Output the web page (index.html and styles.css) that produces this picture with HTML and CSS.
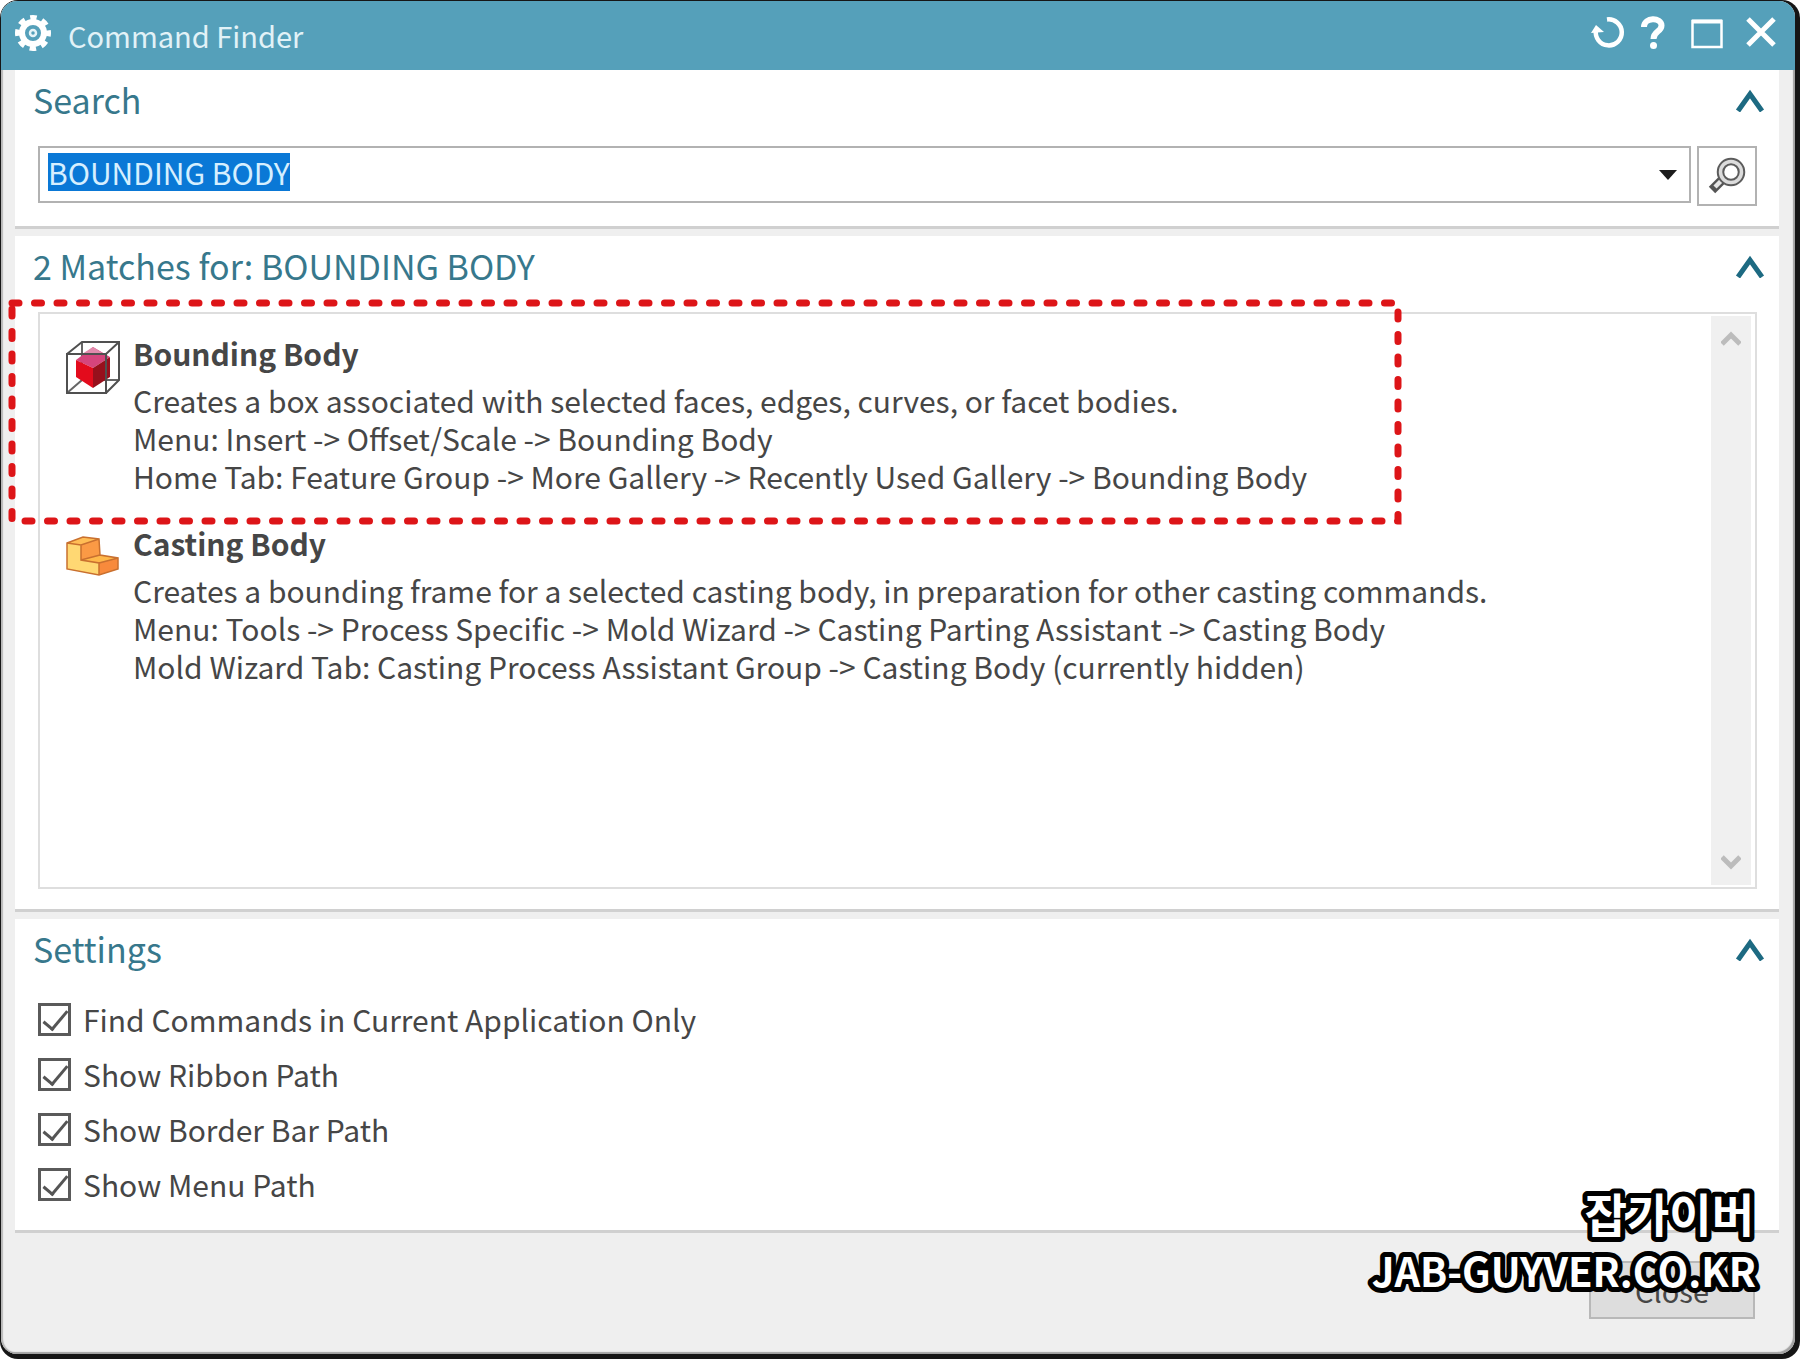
FILE: index.html
```html
<!DOCTYPE html>
<html lang="en">
<head>
    <meta charset="UTF-8">
    <meta name="viewport" content="width=device-width, initial-scale=1.0">
    <title>Command Finder</title>
    <link rel="stylesheet" href="styles.css">
</head>
<body>
<div class="window-frame">
    <div class="dialog">
        <header class="title-bar">
            <svg class="gear-icon" viewBox="0 0 36 36" aria-hidden="true">
                <circle cx="18" cy="18" r="11" fill="none" stroke="#fff" stroke-width="6"/>
                <circle cx="18" cy="18" r="15.5" fill="none" stroke="#fff" stroke-width="5" stroke-dasharray="6.5 5.67" stroke-dashoffset="3.25"/>
                <circle cx="18" cy="18" r="3" fill="none" stroke="#e6f4f8" stroke-width="2.500"/>
            </svg>
            <h1 class="window-title">Command Finder</h1>
            <div class="window-buttons">
                <button class="window-button" type="button" aria-label="Reset">
                    <svg width="34" height="34" viewBox="0 0 34 34">
                        <path d="M16 3.500A13 13 0 1 1 5 14" fill="none" stroke="#fff" stroke-width="4.500"/>
                        <path d="M0 17L5 9L13 16Z" fill="#fff"/>
                    </svg>
                </button>
                <button class="window-button" type="button" aria-label="Help">
                    <svg width="32" height="34" viewBox="0 0 32 34">
                        <path d="M7 11C7 1 24.500 1 24.500 9.500C24.500 16 16.500 15 16.500 23" fill="none" stroke="#fff" stroke-width="6"/>
                        <circle cx="16.500" cy="29.500" r="3.500" fill="#fff"/>
                    </svg>
                </button>
                <button class="window-button window-button-maximize" type="button" aria-label="Maximize">
                    <svg width="32" height="34" viewBox="0 0 32 34">
                        <path d="M1.500 5H30.500V31H1.500Z" fill="none" stroke="#fff" stroke-width="2.500"/>
                        <path d="M1 5.500H31" stroke="#fff" stroke-width="4"/>
                    </svg>
                </button>
                <button class="window-button" type="button" aria-label="Close window">
                    <svg width="32" height="34" viewBox="0 0 32 34">
                        <path d="M3 3L29 29M29 3L3 29" stroke="#fff" stroke-width="5"/>
                    </svg>
                </button>
            </div>
        </header>

        <main class="panels">
            <section class="panel">
                <div class="panel-header">
                    <h2 class="panel-title">Search</h2>
                    <button class="collapse-button" type="button" aria-label="Collapse Search">
                        <svg width="30" height="24" viewBox="0 0 30 24"><path d="M3 23L15 6L27 23" fill="none" stroke="#1d6a82" stroke-width="5"/></svg>
                    </button>
                </div>
                <form class="search-row" onsubmit="return false">
                    <div class="combo">
                        <input class="combo-input" id="query" type="text" value="BOUNDING BODY" aria-label="Search" autocomplete="off" spellcheck="false">
                        <button class="combo-arrow" type="button" aria-label="Recent searches">
                            <svg width="20" height="12" viewBox="0 0 20 12"><path d="M1 1H19L10 11Z" fill="#1c1c1c"/></svg>
                        </button>
                    </div>
                    <button class="find-button" type="submit" aria-label="Find Command">
                        <svg width="40" height="40" viewBox="0 0 40 40">
                            <path d="M16 23L5 34" stroke="#555" stroke-width="9"/>
                            <path d="M17 22L8 31" stroke="#e6e6e6" stroke-width="4.500"/>
                            <circle cx="24" cy="16" r="10.500" fill="#fff" stroke="#5c5c5c" stroke-width="7.500"/>
                            <circle cx="24" cy="16" r="10.500" fill="none" stroke="#dcdcdc" stroke-width="3.500"/>
                        </svg>
                    </button>
                </form>
            </section>

            <section class="panel panel-results">
                <div class="panel-header">
                    <h2 class="panel-title">2 Matches for: BOUNDING BODY</h2>
                    <button class="collapse-button" type="button" aria-label="Collapse Matches">
                        <svg width="30" height="24" viewBox="0 0 30 24"><path d="M3 23L15 6L27 23" fill="none" stroke="#1d6a82" stroke-width="5"/></svg>
                    </button>
                </div>
                <div class="result-box">
                    <ul class="result-list">
                        <li class="result">
                            <svg class="result-icon" viewBox="0 0 56 56" aria-hidden="true">
                                <path d="M17 2V40L2 53M17 40H54" fill="none" stroke="#666" stroke-width="2"/>
                                <path d="M11 20L28 7L45 17L28 28Z" fill="#d5457c"/>
                                <path d="M11 20L28 28V48L11 37Z" fill="#e30b1c"/>
                                <path d="M28 28L45 17V37L28 48Z" fill="#97101c"/>
                                <path d="M17 14L28 7L39 14Z" fill="#e28aac"/>
                                <path d="M2 14H41V53H2ZM2 14L17 2H54V40L41 53M41 14L54 2" fill="none" stroke="#505050" stroke-width="2"/>
                            </svg>
                            <div class="result-text">
                                <h3 class="result-name">Bounding Body</h3>
                                <p>Creates a box associated with selected faces, edges, curves, or facet bodies.</p>
                                <p>Menu: Insert -&gt; Offset/Scale -&gt; Bounding Body</p>
                                <p>Home Tab: Feature Group -&gt; More Gallery -&gt; Recently Used Gallery -&gt; Bounding Body</p>
                            </div>
                            <svg class="highlight" aria-hidden="true"><rect class="highlight-line" x="4" y="4"/></svg>
                        </li>
                        <li class="result">
                            <svg class="result-icon" viewBox="0 0 56 56" aria-hidden="true">
                                <path d="M2 13L16 15V30L34 33V45L2 39Z" fill="#ffd873"/>
                                <path d="M2 13L18 7L34 9L16 15Z" fill="#ffbd55"/>
                                <path d="M16 15L34 9L35 25L16 30Z" fill="#fb9a45"/>
                                <path d="M16 30L35 25L53 28L34 33Z" fill="#ffb84a"/>
                                <path d="M34 33L53 28V39L34 45Z" fill="#f88a3c"/>
                                <path d="M2 13L18 7L34 9L35 25L53 28V39L34 45L2 39ZM2 13L16 15L34 9M16 15V30L34 33V45M16 30L35 25M34 33L53 28" fill="none" stroke="#c9702f" stroke-width="1.500"/>
                            </svg>
                            <div class="result-text">
                                <h3 class="result-name">Casting Body</h3>
                                <p>Creates a bounding frame for a selected casting body, in preparation for other casting commands.</p>
                                <p>Menu: Tools -&gt; Process Specific -&gt; Mold Wizard -&gt; Casting Parting Assistant -&gt; Casting Body</p>
                                <p>Mold Wizard Tab: Casting Process Assistant Group -&gt; Casting Body (currently hidden)</p>
                            </div>
                        </li>
                    </ul>
                    <div class="scrollbar">
                        <button class="scroll-button" type="button" aria-label="Scroll up">
                            <svg width="20" height="16" viewBox="0 0 20 16"><path d="M1 13L10 4L19 13" fill="none" stroke="#bcbcbc" stroke-width="5"/></svg>
                        </button>
                        <button class="scroll-button" type="button" aria-label="Scroll down">
                            <svg width="20" height="16" viewBox="0 0 20 16"><path d="M1 3L10 12L19 3" fill="none" stroke="#bcbcbc" stroke-width="5"/></svg>
                        </button>
                    </div>
                </div>
            </section>

            <section class="panel">
                <div class="panel-header">
                    <h2 class="panel-title">Settings</h2>
                    <button class="collapse-button" type="button" aria-label="Collapse Settings">
                        <svg width="30" height="24" viewBox="0 0 30 24"><path d="M3 23L15 6L27 23" fill="none" stroke="#1d6a82" stroke-width="5"/></svg>
                    </button>
                </div>
                <div class="options">
                    <label class="option"><input class="option-box" type="checkbox" checked>Find Commands in Current Application Only</label>
                    <label class="option"><input class="option-box" type="checkbox" checked>Show Ribbon Path</label>
                    <label class="option"><input class="option-box" type="checkbox" checked>Show Border Bar Path</label>
                    <label class="option"><input class="option-box" type="checkbox" checked>Show Menu Path</label>
                </div>
            </section>
        </main>

        <footer class="dialog-footer">
            <button class="close-button" type="button">Close</button>
        </footer>
    </div>

    <svg class="watermark" viewBox="0 0 420 120">
        <text class="watermark-name" x="402" y="46" lang="ko">잡가이버</text>
        <text class="watermark-url" x="404" y="101">JAB-GUYVER.CO.KR</text>
    </svg>
</div>

<script>
    // select the current query on load
    window.addEventListener('load', () => {
        const query = document.getElementById('query');
        query.focus();
        query.select();
    });
</script>
</body>
</html>
```
FILE: styles.css
```css
* {
    margin: 0;
    padding: 0;
    box-sizing: border-box;
}

body {
    font-family: 'Noto Sans CJK KR', 'Noto Sans', sans-serif;
    font-size: 30px;
    line-height: 38px;
    color: #464646;
    background: #ffffff;
}

button, input {
    font: inherit;
    color: inherit;
}

button {
    display: flex;
    align-items: center;
    justify-content: center;
    background: none;
    border: none;
    cursor: pointer;
}

/* Window */
.window-frame {
    position: relative;
    display: flex;
    min-height: 100vh;
    padding: 1px 5px 5px 1px;
    background: #161616;
    border-radius: 18px;
}

.dialog {
    flex: 1;
    display: flex;
    flex-direction: column;
    background: #efefef;
    border-radius: 16px;
    box-shadow: inset -2px -2px 1px #a2a2a2, inset 2px 0 1px #b8b8b8;
}

.title-bar {
    display: flex;
    align-items: center;
    height: 69px;
    padding: 0 18px 6px 14px;
    background: #55a0ba;
    border-radius: 16px 16px 0 0;
}

.gear-icon {
    width: 36px;
    height: 36px;
}

.window-title {
    flex: 1;
    margin-left: 17px;
    padding-top: 4px;
    font-size: 29px;
    font-weight: 400;
    color: #e2f2f7;
}

.window-buttons {
    display: flex;
    gap: 12px;
}

.window-button-maximize {
    padding: 0 10px;
}

/* Panels */
.panels {
    flex: 1;
    display: flex;
    flex-direction: column;
    gap: 7px;
    padding: 0 16px 0 14px;
}

.panel {
    padding: 8px 14px 20px 18px;
    background: #ffffff;
    border-bottom: 3px solid #d0d0d0;
}

.panel-results {
    flex: 1;
    display: flex;
    flex-direction: column;
}

.panel-header {
    display: flex;
    align-items: center;
    justify-content: space-between;
    height: 42px;
    padding-top: 2px;
    margin-bottom: 26px;
}

.panel-title {
    font-size: 34px;
    font-weight: 400;
    color: #37788c;
}

/* Search */
.search-row {
    display: flex;
    align-items: flex-start;
    gap: 6px;
    padding: 0 8px 0 5px;
}

.combo {
    flex: 1;
    display: flex;
    align-items: center;
    height: 57px;
    padding-right: 10px;
    border: 2px solid #b2b2b2;
}

.combo-input {
    flex: 1;
    height: 38px;
    margin: 0 0 6px 8px;
    border: none;
    outline: none;
    line-height: 38px;
    background: transparent;
}

.combo-input::selection {
    color: #d6efff;
    background: #0a78d6;
}

.combo-arrow {
    width: 22px;
    height: 40px;
}

.find-button {
    width: 60px;
    height: 60px;
    border: 2px solid #b2b2b2;
}

/* Results */
.result-box {
    flex: 1;
    display: flex;
    margin: 0 8px 0 5px;
    border: 2px solid #dedede;
}

.result-list {
    flex: 1;
    display: flex;
    flex-direction: column;
    gap: 28px;
    padding: 19px 24px 19px 25px;
    list-style: none;
}

.result {
    position: relative;
    display: flex;
    gap: 12px;
}

.result-icon {
    flex: none;
    width: 56px;
    height: 56px;
    margin-top: 7px;
}

.result-name {
    margin-bottom: 8px;
    font-size: 30px;
    line-height: 40px;
    font-weight: 700;
}

/* dashed marker around the matching command */
.highlight {
    position: absolute;
    top: -34px;
    left: -57px;
    width: 1394px;
    height: 226px;
    pointer-events: none;
}

.highlight-line {
    width: calc(100% - 8px);
    height: calc(100% - 8px);
    fill: none;
    stroke: #dd1518;
    stroke-width: 7px;
    stroke-dasharray: 7 15.5;
    stroke-linecap: round;
}

.scrollbar {
    display: flex;
    flex-direction: column;
    justify-content: space-between;
    width: 40px;
    margin: 2px 4px 2px 2px;
    background: #f0f0f0;
}

.scroll-button {
    height: 46px;
}

/* Settings */
.options {
    display: flex;
    flex-direction: column;
    align-items: flex-start;
    gap: 7px;
    padding: 0 0 2px 5px;
}

.option {
    display: flex;
    align-items: center;
    gap: 12px;
    height: 48px;
}

.option-box {
    appearance: none;
    width: 33px;
    height: 33px;
    border: 3px solid #5a5a5a;
    background: #ffffff;
}

.option-box:checked::before {
    content: '';
    display: block;
    width: 22px;
    height: 10px;
    margin: 5px 0 0 2px;
    border-left: 3px solid #555555;
    border-bottom: 3px solid #555555;
    transform: rotate(-50deg);
}

/* Footer */
.dialog-footer {
    display: flex;
    justify-content: flex-end;
    padding: 28px 40px 35px;
}

.close-button {
    width: 166px;
    height: 58px;
    font-size: 29px;
    border: 2px solid #b8b8b8;
    background: #dddddd;
}

/* Watermark */
.watermark {
    position: absolute;
    right: 28px;
    bottom: 53px;
    width: 420px;
    height: 120px;
    overflow: visible;
    pointer-events: none;
}

.watermark-name,
.watermark-url {
    font-weight: 700;
    text-anchor: end;
    fill: #ffffff;
    stroke: #000000;
    stroke-width: 10px;
    stroke-linejoin: round;
    paint-order: stroke fill;
}

.watermark-name {
    font-size: 46px;
}

.watermark-url {
    font-size: 40px;
}
```
